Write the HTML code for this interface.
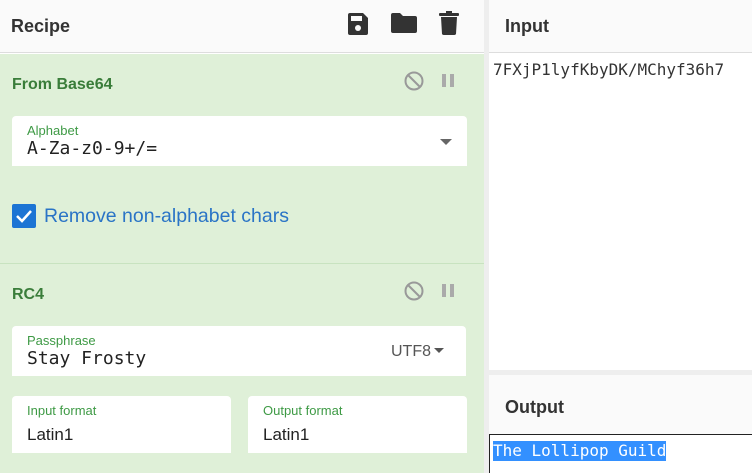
<!DOCTYPE html>
<html><head><style>
*{margin:0;padding:0;box-sizing:border-box}
body{width:752px;height:473px;overflow:hidden;background:#fff;font-family:"Liberation Sans",sans-serif;position:relative}
.abs{position:absolute}
.title{font-weight:bold;font-size:18px;color:#333}
.opt{font-weight:bold;font-size:16px;color:#3a7d3a}
.box{background:#fff;border-radius:4px 4px 0 0}
.lbl{font-size:13px;color:#3e9a45}
.mono{font-family:"DejaVu Sans Mono","Liberation Mono",monospace}
.val{font-size:17px;color:#222}
</style></head><body>
<div class="abs" style="left:0;top:0;width:484px;height:53px;background:#fafafa;border-bottom:1px solid #ddd"></div>
<div class="abs title" style="left:11px;top:16px">Recipe</div>
<svg class="abs" style="left:346px;top:12px" width="24" height="24" viewBox="0 0 24 24"><path d="M2 3a2 2 0 0 1 2-2h13l5 5v15a2 2 0 0 1-2 2H4a2 2 0 0 1-2-2z" fill="#333"/><rect x="5" y="4" width="11" height="5" fill="#fafafa"/><circle cx="12" cy="16" r="3" fill="#fafafa"/></svg>
<svg class="abs" style="left:391px;top:12px" width="26" height="22" viewBox="0 0 26 22"><path d="M0 3a2 2 0 0 1 2-2h7l3 3h12a2 2 0 0 1 2 2v13a2 2 0 0 1-2 2H2a2 2 0 0 1-2-2z" fill="#333"/></svg>
<svg class="abs" style="left:438px;top:10px" width="22" height="26" viewBox="0 0 22 26"><rect x="1" y="3" width="20" height="3" rx="1" fill="#333"/><rect x="8" y="1" width="6" height="3" fill="#333"/><path d="M3 7h16l-1 17a2 2 0 0 1-2 1H6a2 2 0 0 1-2-1z" fill="#333"/></svg>
<div class="abs" style="left:0;top:54px;width:484px;height:419px;background:#dff0d8"></div>
<div class="abs" style="left:0;top:263px;width:484px;height:1px;background:#c8e3c0"></div>
<div class="abs" style="left:484px;top:0;width:5px;height:473px;background:#eee"></div>
<div class="abs opt" style="left:12px;top:76px">From Base64</div>
<svg class="abs" style="left:403px;top:70px" width="22" height="22" viewBox="0 0 22 22"><circle cx="11" cy="11" r="8.5" fill="none" stroke="#999" stroke-width="2"/><path d="M5 5l12 12" stroke="#999" stroke-width="2"/></svg>
<div class="abs" style="left:442px;top:74px;width:4px;height:13px;background:#aaa"></div>
<div class="abs" style="left:450px;top:74px;width:4px;height:13px;background:#aaa"></div>
<div class="abs box" style="left:12px;top:116px;width:455px;height:50px"></div>
<div class="abs lbl" style="left:27px;top:123px">Alphabet</div>
<div class="abs mono val" style="left:27px;top:138px;font-size:18px">A-Za-z0-9+/=</div>
<div class="abs" style="left:440px;top:139px;border-left:6px solid transparent;border-right:6px solid transparent;border-top:6px solid #666"></div>
<div class="abs" style="left:12px;top:204px;width:24px;height:24px;background:#1c74d4;border-radius:2px"></div>
<svg class="abs" style="left:12px;top:204px" width="24" height="24"><path d="M5 12l5 5 9-10" fill="none" stroke="#fff" stroke-width="2.5"/></svg>
<div class="abs" style="left:44px;top:205px;font-size:19.5px;color:#2a74c6">Remove non-alphabet chars</div>
<div class="abs opt" style="left:12px;top:286px">RC4</div>
<svg class="abs" style="left:403px;top:280px" width="22" height="22" viewBox="0 0 22 22"><circle cx="11" cy="11" r="8.5" fill="none" stroke="#999" stroke-width="2"/><path d="M5 5l12 12" stroke="#999" stroke-width="2"/></svg>
<div class="abs" style="left:442px;top:284px;width:4px;height:13px;background:#aaa"></div>
<div class="abs" style="left:450px;top:284px;width:4px;height:13px;background:#aaa"></div>
<div class="abs box" style="left:12px;top:326px;width:454px;height:50px"></div>
<div class="abs lbl" style="left:27px;top:333px">Passphrase</div>
<div class="abs mono val" style="left:27px;top:348px;font-size:18px">Stay Frosty</div>
<div class="abs" style="left:391px;top:343px;font-size:16px;color:#555">UTF8</div>
<div class="abs" style="left:434px;top:348px;border-left:5px solid transparent;border-right:5px solid transparent;border-top:5px solid #555"></div>
<div class="abs box" style="left:12px;top:396px;width:219px;height:57px"></div>
<div class="abs lbl" style="left:27px;top:403px">Input format</div>
<div class="abs val" style="left:27px;top:425px">Latin1</div>
<div class="abs box" style="left:248px;top:396px;width:219px;height:57px"></div>
<div class="abs lbl" style="left:263px;top:403px">Output format</div>
<div class="abs val" style="left:263px;top:425px">Latin1</div>
<div class="abs" style="left:489px;top:0;width:263px;height:53px;background:#fafafa;border-bottom:1px solid #ddd"></div>
<div class="abs title" style="left:505px;top:16px">Input</div>
<div class="abs mono" style="left:493px;top:60px;font-size:16px;color:#333">7FXjP1lyfKbyDK/MChyf36h7</div>
<div class="abs" style="left:489px;top:370px;width:263px;height:5px;background:#eee"></div>
<div class="abs" style="left:489px;top:375px;width:263px;height:59px;background:#fafafa"></div>
<div class="abs title" style="left:505px;top:397px">Output</div>
<div class="abs" style="left:489px;top:434px;width:263px;height:39px;border:1px solid #222;border-right:none;border-bottom:none"></div>
<div class="abs mono" style="left:493px;top:441px;font-size:16px;line-height:20px;color:#fff;background:#3390ff">The Lollipop Guild</div>
</body></html>
